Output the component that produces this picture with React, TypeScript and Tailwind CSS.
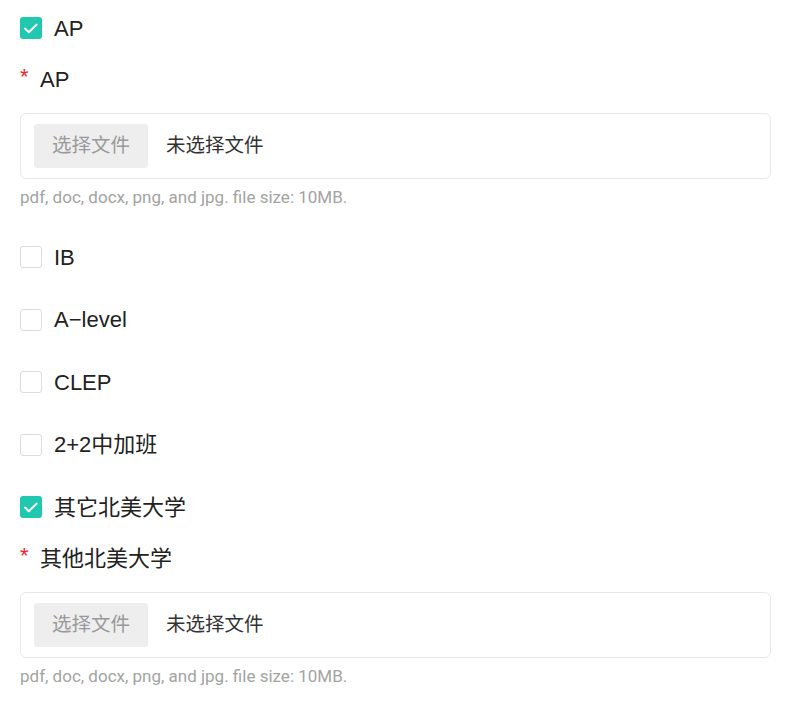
import { useState } from 'react';

const font = { fontFamily: '"Liberation Sans", "Noto Sans CJK SC", sans-serif' };
const hintFont = { fontFamily: 'Roboto, "Liberation Sans", sans-serif' };

type Option = { key: string; label: string; field?: string };

const options: Option[] = [
  { key: 'ap', label: 'AP', field: 'AP' },
  { key: 'ib', label: 'IB' },
  { key: 'alevel', label: 'A−level' },
  { key: 'clep', label: 'CLEP' },
  { key: '22', label: '2+2中加班' },
  { key: 'other', label: '其它北美大学', field: '其他北美大学' },
];

function Checkbox({ checked, onClick }: { checked: boolean; onClick: () => void }) {
  return (
    <button
      onClick={onClick}
      className={
        checked
          ? 'flex h-[22px] w-[22px] shrink-0 items-center justify-center rounded-[3px] bg-[#21c8b0]'
          : 'flex h-[22px] w-[22px] shrink-0 items-center justify-center rounded-[3px] border border-[#dcdcdc] bg-white'
      }
    >
      {checked && (
        <svg width="22" height="22" viewBox="0 0 22 22" fill="none">
          <path d="M5 11.6 L8.8 15.2 L16.6 7.6" stroke="white" strokeWidth="2" strokeLinecap="round" strokeLinejoin="round" />
        </svg>
      )}
    </button>
  );
}

function FileField({ label }: { label: string }) {
  return (
    <div>
      <div className="mt-[26.5px] flex h-7 items-center text-[22px] text-[#222]">
        <span className="relative top-[-3px] mr-[8px] w-[12px] text-[22px] leading-none text-[#f5222d]">*</span>
        {label}
      </div>
      <div className="mt-[19.5px] flex h-[66px] items-center rounded-[6px] border border-[#e8e8e8] bg-white px-[13px]">
        <div className="flex h-[44px] w-[114px] items-center justify-center rounded-[3px] bg-[#eeeeee] text-[19.5px] text-[#999]">
          选择文件
        </div>
        <span className="ml-[18px] text-[19.5px] text-[#333]">未选择文件</span>
      </div>
      <div className="mt-[9.5px] text-[17px] leading-[17px] text-[#a3a3a3]" style={hintFont}>
        pdf, doc, docx, png, and jpg. file size: 10MB.
      </div>
    </div>
  );
}

export default function App() {
  const [checked, setChecked] = useState<Record<string, boolean>>({ ap: true, other: true });

  return (
    <div className="min-h-[702px] w-[800px] bg-white pl-5 pr-[29px] pt-[17px]" style={font}>
      <div className="flex flex-col">
        {options.map((o, i) => (
          <div key={o.key} className={i === 0 ? '' : 'mt-[40.5px]'}>
            <div className="flex h-[22px] items-center gap-3">
              <Checkbox
                checked={!!checked[o.key]}
                onClick={() => setChecked({ ...checked, [o.key]: !checked[o.key] })}
              />
              <span className="text-[22px] text-[#222]">{o.label}</span>
            </div>
            {checked[o.key] && o.field && <FileField label={o.field} />}
          </div>
        ))}
      </div>
    </div>
  );
}
